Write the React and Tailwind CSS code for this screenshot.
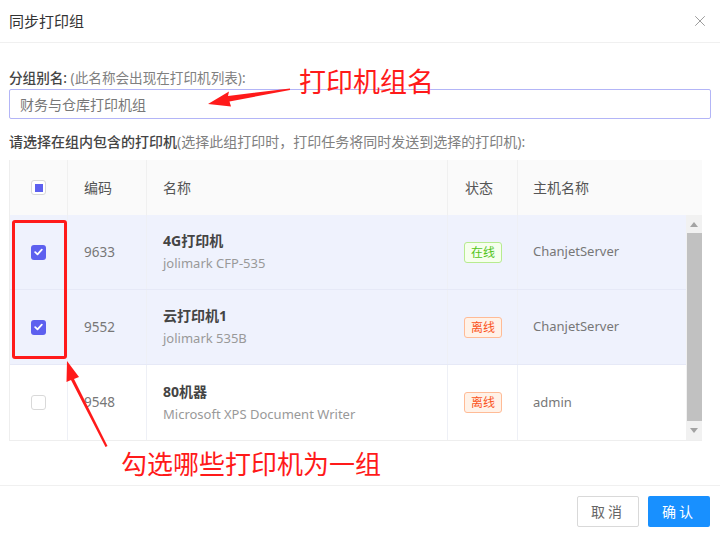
import { X } from "lucide-react";

const ROWS = [
  { code: "9633", name: "4G打印机", model: "jolimark CFP-535", online: true, host: "ChanjetServer", checked: true },
  { code: "9552", name: "云打印机1", model: "jolimark 535B", online: false, host: "ChanjetServer", checked: true },
  { code: "9548", name: "80机器", model: "Microsoft XPS Document Writer", online: false, host: "admin", checked: false },
];

function Check({ checked }) {
  if (checked) {
    return (
      <span className="flex h-[15px] w-[15px] items-center justify-center rounded-[3px] bg-[#5d60ef]">
        <svg width="9" height="8" viewBox="0 0 9 8">
          <path d="M1.2 4.2 L3.5 6.3 L7.8 1.6" fill="none" stroke="#fff" strokeWidth="1.8" strokeLinecap="round" strokeLinejoin="round" />
        </svg>
      </span>
    );
  }
  return <span className="block h-[15px] w-[15px] rounded-[3px] border border-[#d9d9d9] bg-white" />;
}

function Status({ online }) {
  return online ? (
    <span className="rounded-[3px] border border-[#b7eb8f] bg-[#f6ffed] px-[6px] text-[12px] leading-[19px] text-[#52c41a]">
      在线
    </span>
  ) : (
    <span className="rounded-[3px] border border-[#ffbb96] bg-[#fff2e8] px-[6px] text-[12px] leading-[19px] text-[#fa541c]">
      离线
    </span>
  );
}

export default function App() {
  return (
    <div
      className="relative h-[537px] w-[720px] overflow-hidden bg-white text-[#333]"
      style={{ fontFamily: '"Noto Sans", "Noto Sans CJK SC", sans-serif' }}
    >
      <div className="flex h-[43px] items-center justify-between border-b border-[#f0f0f0] pl-[9px] pr-[11px]">
        <div className="text-[15px] text-[#333]">同步打印组</div>
        <X size={18} strokeWidth={1.1} className="text-[#888]" />
      </div>

      <div className="px-[9px] pt-[25px]">
        <div className="text-[13.6px] leading-[20px] text-[#808080]">
          <span className="font-medium text-[#444]">分组别名:</span> (此名称会出现在打印机列表):
        </div>
        <div className="mt-[1px] flex h-[30px] items-center rounded-[2px] border border-[#b3b5f7] px-[10px] text-[14px] text-[#777]">
          财务与仓库打印机组
        </div>

        <div className="mt-[13px] text-[14px] leading-[20px] text-[#808080]">
          <span className="font-medium text-[#444]">请选择在组内包含的打印机</span>(选择此组打印时，打印任务将同时发送到选择的打印机):
        </div>

        <div className="mt-[8px] w-[693px] border-b border-l border-[#eeeeee] text-[14px]">
          <div className="flex h-[55px] bg-[#fafafa] text-[#555]">
            <div className="flex w-[58px] items-center justify-center border-r border-[#f0f0f0]">
              <span className="flex h-[15px] w-[15px] items-center justify-center rounded-[3px] border border-[#d9d9d9] bg-white">
                <span className="h-[8px] w-[8px] bg-[#5d60ef]" />
              </span>
            </div>
            <div className="flex w-[79px] items-center border-r border-[#f0f0f0] pl-[16px]">编码</div>
            <div className="flex w-[301px] items-center border-r border-[#f0f0f0] pl-[16px]">名称</div>
            <div className="flex w-[70px] items-center border-r border-[#f0f0f0] pl-[17px]">状态</div>
            <div className="flex flex-1 items-center pl-[15px]">主机名称</div>
          </div>

          <div className="flex">
            <div className="flex-1">
              {ROWS.map((r, i) => (
                <div
                  key={r.code}
                  className={`flex h-[75px] ${i < 2 ? "border-b border-[#e6e9f7] bg-[#eff2fd]" : "bg-white"}`}
                >
                  <div className="flex w-[58px] items-center justify-center border-r border-[#eef0f6]">
                    <Check checked={r.checked} />
                  </div>
                  <div className="flex w-[79px] items-center border-r border-[#eef0f6] pl-[16px] text-[13.5px] text-[#777]">
                    {r.code}
                  </div>
                  <div className="flex w-[301px] flex-col justify-center border-r border-[#eef0f6] pl-[16px]">
                    <div className="text-[14px] font-bold leading-[22px] text-[#444]">{r.name}</div>
                    <div className="text-[13px] leading-[22px] text-[#999]">{r.model}</div>
                  </div>
                  <div className="flex w-[70px] items-center border-r border-[#eef0f6] pl-[16px]">
                    <Status online={r.online} />
                  </div>
                  <div className="flex flex-1 items-center pl-[15px] text-[13px] text-[#777]">{r.host}</div>
                </div>
              ))}
            </div>
            <div className="flex w-[16px] flex-col items-center bg-[#f1f1f1]">
              <div className="flex h-[18px] items-center">
                <svg width="8" height="5" viewBox="0 0 8 5"><path d="M0 5 L4 0 L8 5 Z" fill="#a3a3a3" /></svg>
              </div>
              <div className="h-[188px] w-[15px] bg-[#c1c1c1]" />
              <div className="flex flex-1 items-center">
                <svg width="8" height="5" viewBox="0 0 8 5"><path d="M0 0 L4 5 L8 0 Z" fill="#a3a3a3" /></svg>
              </div>
            </div>
          </div>
        </div>
      </div>

      <div className="mt-[44px] flex justify-end gap-[9px] border-t border-[#f0f0f0] pr-[10px] pt-[10px]">
        <button className="h-[31px] w-[62px] rounded-[2px] border border-[#d9d9d9] bg-white text-[14px] tracking-[3px] text-[#666]">
          取消
        </button>
        <button className="h-[31px] w-[62px] rounded-[2px] bg-[#1890ff] text-[14px] tracking-[3px] text-white">
          确认
        </button>
      </div>

      {/* annotations */}
      <div className="absolute left-[299px] top-[64px] text-[27px] leading-[36px] text-[#ff1a1a]">打印机组名</div>
      <div className="absolute left-[121px] top-[446px] text-[26px] leading-[36px] text-[#ff1a1a]">勾选哪些打印机为一组</div>
      <div className="absolute left-[12px] top-[220px] h-[139px] w-[55px] rounded-[3px] border-[3px] border-[#ff1a1a]" />
      <svg className="absolute left-0 top-0" width="720" height="537" viewBox="0 0 720 537">
        <path d="M290 88.5 L228 96 L229 91.5 L208 104 L231 106.5 L229.5 101.5 L290 90 Z" fill="#ff1a1a" />
        <path d="M107.5 446 L74 379 L79 377 L67 361 L66.5 382 L71 380 L105.5 447 Z" fill="#ff1a1a" />
      </svg>
    </div>
  );
}
